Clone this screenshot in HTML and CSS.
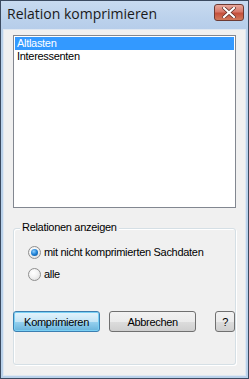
FILE: index.html
```html
<!DOCTYPE html>
<html>
<head>
<meta charset="utf-8">
<link rel="stylesheet" href="styles.css">
</head>
<body>
<div class="window">
  <div class="titlebar">
    <span class="title">Relation komprimieren</span>
    <div class="close">
      <svg width="14" height="11" viewBox="0 0 14 11"><path d="M2 1 L12 10 M12 1 L2 10" stroke="#5a2a22" stroke-width="3.6" stroke-linecap="square"/><path d="M2 1 L12 10 M12 1 L2 10" stroke="#ffffff" stroke-width="2.2" stroke-linecap="square"/></svg>
    </div>
  </div>
  <div class="client">
    <div class="listbox">
      <div class="item selected">Altlasten</div>
      <div class="item">Interessenten</div>
    </div>
    <div class="group">
      <div class="legend">Relationen anzeigen</div>
      <div class="radio-row">
        <span class="radio checked"><span class="dot"></span></span>
        <span>mit nicht komprimierten Sachdaten</span>
      </div>
      <div class="radio-row">
        <span class="radio"></span>
        <span>alle</span>
      </div>
      <div class="buttons">
        <div class="btn default">Komprimieren</div>
        <div class="btn">Abbrechen</div>
        <div class="btn help">?</div>
      </div>
    </div>
  </div>
</div>
</body>
</html>
```
FILE: styles.css
```css
html, body { margin: 0; padding: 0; }
body {
  width: 249px; height: 379px; overflow: hidden;
  font-family: "Liberation Sans", Arial, sans-serif;
  font-size: 11px; letter-spacing: -0.3px; color: #000;
}
.window {
  width: 249px; height: 379px; box-sizing: border-box;
  border: 1px solid #3b4a60;
  background: #b9d1ea;
  display: flex; flex-direction: column;
}
.titlebar {
  height: 28px; flex: none;
  display: flex; align-items: center; justify-content: space-between;
  padding: 0 4px 0 6px;
  background: linear-gradient(to bottom, #c8daf0 0%, #bcd2ec 60%, #b6cdea 100%);
}
.title {
  font-family: "Open Sans", "Liberation Sans", sans-serif;
  font-size: 14px; letter-spacing: 0; color: #1a1a1a; margin-top: -4px;
}
.close {
  width: 30px; height: 17px; margin-top: -6px;
  border: 1px solid #6d3a33; border-radius: 3px;
  background: linear-gradient(to bottom, #e8a89c 0%, #d7796a 45%, #c5503c 55%, #d07a5c 100%);
  display: flex; align-items: center; justify-content: center;
  box-sizing: border-box;
}
.client {
  flex: 1;
  margin: 0 2px 2px 2px;
  background: #f0f0f0;
  border: 1px solid #dfe7f1;
  padding: 5px 9px 10px 9px;
  display: flex; flex-direction: column;
}
.listbox {
  height: 173px; flex: none; box-sizing: border-box;
  background: #fff;
  border: 1px solid #828790;
  padding: 1px;
}
.item { height: 13px; line-height: 13px; padding-left: 2px; }
.item.selected { background: #3399ff; color: #fff; }
.group {
  position: relative;
  margin-top: 20px; flex: 1;
  border: 1px solid #d5dfe5; border-radius: 3px;
  box-shadow: inset 1px 1px 0 #fff, 1px 1px 0 #fff;
  padding: 12px 0 0 14px;
  display: flex; flex-direction: column;
}
.legend {
  position: absolute; left: 6px; top: -9px;
  background: #f0f0f0; padding: 0 2px; line-height: 14px;
}
.radio-row {
  display: flex; align-items: center; gap: 3px; height: 22px;
}
.radio {
  width: 11px; height: 11px; border-radius: 50%;
  border: 1px solid #8f8f8f;
  background: radial-gradient(circle at 40% 35%, #ffffff 0%, #f4f4f4 40%, #d8d8d8 100%);
  display: flex; align-items: center; justify-content: center;
}
.dot {
  width: 7px; height: 7px; border-radius: 50%;
  background: radial-gradient(circle at 40% 35%, #8fd0ff 0%, #1d7fd4 50%, #0d4e8c 100%);
}
.buttons {
  display: flex; margin-top: 26px; margin-left: -15px;
}
.btn {
  height: 21px; box-sizing: border-box;
  width: 88px; border: 1px solid #707070; border-radius: 3px;
  background: linear-gradient(to bottom, #f2f2f2 0%, #ebebeb 50%, #dddddd 51%, #cfcfcf 100%);
  display: flex; align-items: center; justify-content: center;
  margin-right: 9px;
}
.btn.default {
  border-color: #3c7fb1;
  background: linear-gradient(to bottom, #e5f4fc 0%, #c4e5f6 50%, #98d1ef 51%, #68b3db 100%);
  box-shadow: inset 0 0 0 1px #7ad0f4;
}
.btn.help { width: 20px; margin-left: 10px; margin-right: 0; }
```
